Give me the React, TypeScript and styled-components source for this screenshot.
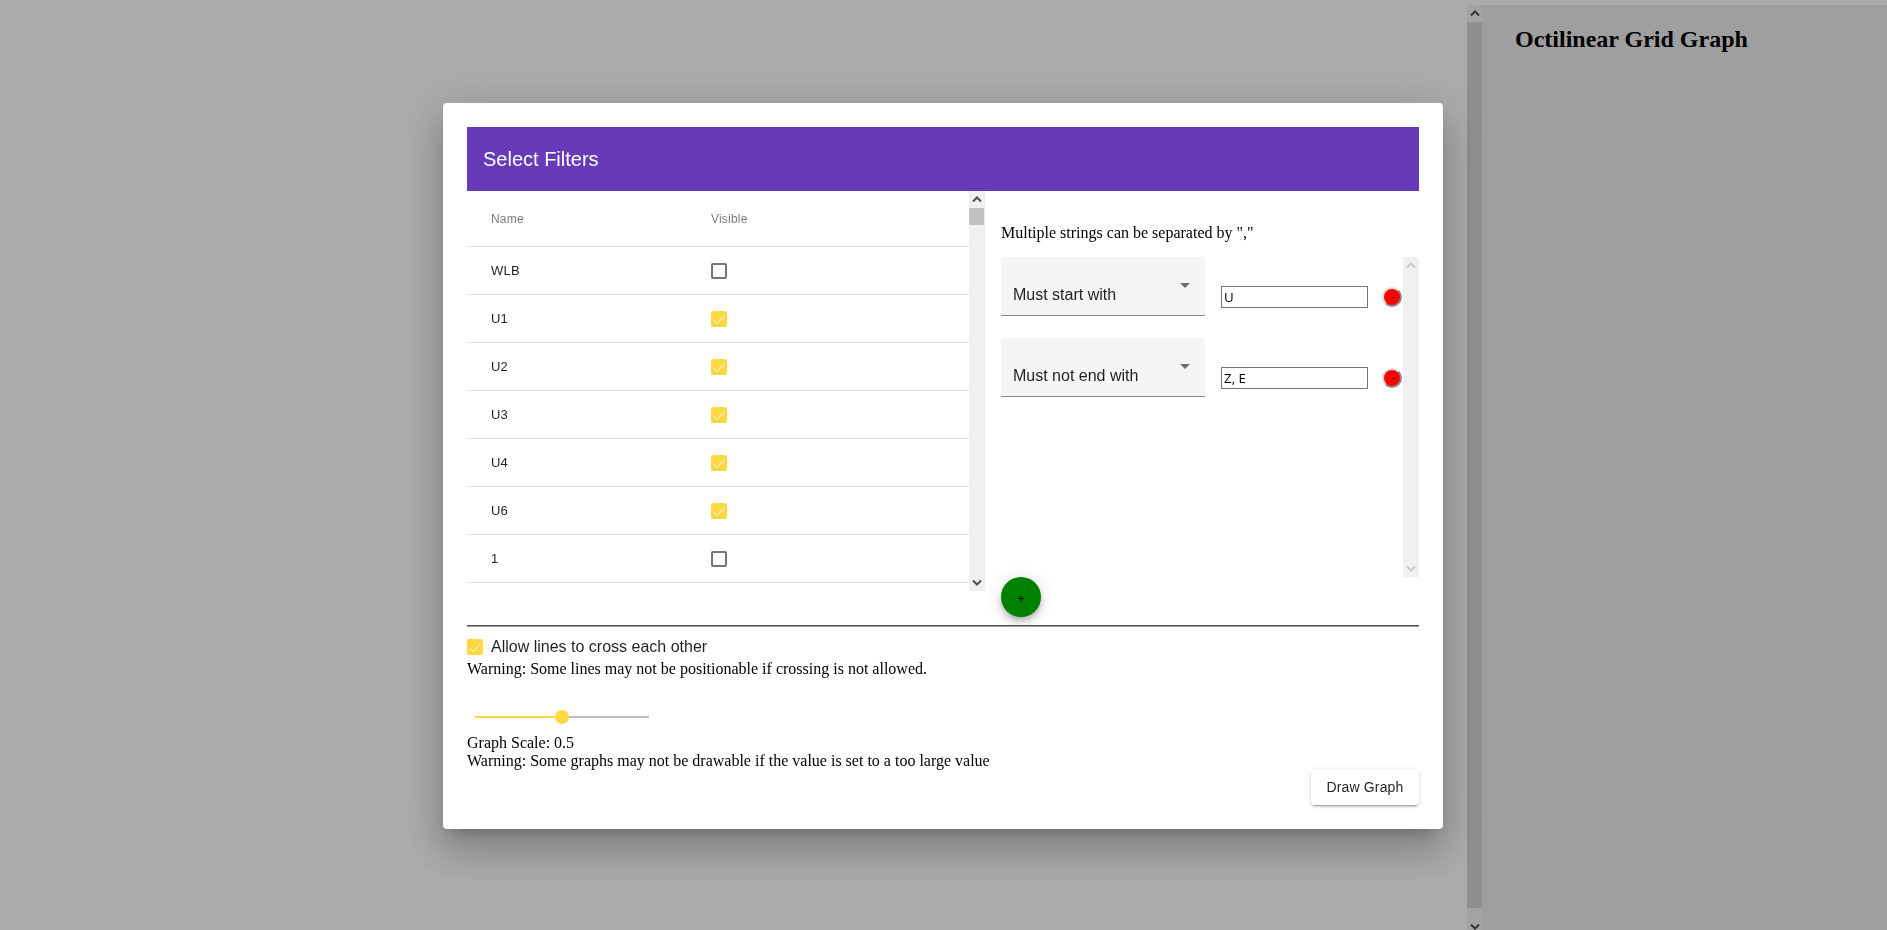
import React from "react";
import styled, { createGlobalStyle } from "styled-components";

const Global = createGlobalStyle`
  html, body { margin: 0; padding: 0; height: 100%; overflow: hidden; background: #fff; }
  #root { height: 930px; }
  * { box-sizing: border-box; }
`;

const SANS = `"Liberation Sans", Arial, sans-serif`;
const SERIF = `"Liberation Serif", "Times New Roman", serif`;
const AMBER = "#ffd740";

const Page = styled.div`
  display: flex;
  height: 930px;
  overflow: hidden;
  background: #fff;
  font-family: ${SERIF};
  font-size: 16px;
`;
const Canvas = styled.main`
  flex: 1;
`;
const SidePanel = styled.aside`
  width: 420px;
  height: 930px;
  margin-top: 5px;
  display: flex;
  flex: none;
  background: #eeeeee;
`;
const PanelBody = styled.div`
  flex: 1;
  padding: 21px 0 0 33px;
`;
const PanelTitle = styled.h2`
  margin: 0;
  font-size: 24px;
  line-height: 27px;
  font-weight: 700;
  color: #000;
`;

const Bar = styled.div<{ $w: number; $h: number; $track: string }>`
  width: ${(p) => p.$w}px;
  height: ${(p) => p.$h}px;
  flex: none;
  display: flex;
  flex-direction: column;
  justify-content: space-between;
  background: ${(p) => p.$track};
`;
const BarTop = styled.div`
  display: flex;
  flex-direction: column;
`;
const ArrowBox = styled.div`
  height: 17px;
  display: flex;
  align-items: center;
  justify-content: center;
  flex: none;
`;
const Thumb = styled.div<{ $h: number; $w: number; $color: string }>`
  width: ${(p) => p.$w}px;
  height: ${(p) => p.$h}px;
  background: ${(p) => p.$color};
`;

const Chevron: React.FC<{ down?: boolean; muted?: boolean }> = ({ down, muted }) => (
  <svg width="10" height="7" viewBox="0 0 10 7" fill="none">
    <path
      d={down ? "M1 1.5 L5 5.5 L9 1.5" : "M1 5.5 L5 1.5 L9 5.5"}
      stroke={muted ? "#c8c8c8" : "#505050"}
      strokeWidth="2"
    />
  </svg>
);

const Scrollbar: React.FC<{
  w: number;
  h: number;
  thumb?: number;
  thumbW?: number;
  muted?: boolean;
  track?: string;
  thumbColor?: string;
}> = ({ w, h, thumb, thumbW, muted, track = "#f0f0f0", thumbColor = "#c1c1c1" }) => (
  <Bar $w={w} $h={h} $track={track}>
    <BarTop>
      <ArrowBox>
        <Chevron muted={muted} />
      </ArrowBox>
      {thumb ? <Thumb $h={thumb} $w={thumbW ?? w} $color={thumbColor} /> : null}
    </BarTop>
    <ArrowBox>
      <Chevron down muted={muted} />
    </ArrowBox>
  </Bar>
);

const Overlay = styled.div`
  position: fixed;
  inset: 0;
  display: flex;
  align-items: center;
  justify-content: center;
  padding: 2px 1px 0 0;
  background: rgba(0, 0, 0, 0.33);
`;
const Dialog = styled.section`
  width: 1000px;
  height: 726px;
  padding: 24px;
  background: #fff;
  border-radius: 4px;
  box-shadow: 0 11px 15px -7px rgba(0, 0, 0, 0.2), 0 24px 38px 3px rgba(0, 0, 0, 0.14),
    0 9px 46px 8px rgba(0, 0, 0, 0.12);
  display: flex;
  flex-direction: column;
`;
const Header = styled.header`
  height: 64px;
  flex: none;
  display: flex;
  align-items: center;
  padding-left: 16px;
  background: #673ab7;
  color: #fff;
  font: 400 20px ${SANS};
`;
const Columns = styled.div`
  display: flex;
  gap: 16px;
  align-items: flex-start;
  height: 426px;
  flex: none;
`;
const TableArea = styled.div`
  display: flex;
  width: 518px;
  height: 400px;
  flex: none;
`;
const Table = styled.div`
  flex: 1;
  font-family: ${SANS};
`;
const Row = styled.div<{ $head?: boolean }>`
  display: grid;
  grid-template-columns: 220px 1fr;
  align-items: center;
  height: ${(p) => (p.$head ? 56 : 48)}px;
  padding-left: 24px;
  border-bottom: 1px solid #e0e0e0;
  font-size: ${(p) => (p.$head ? 12 : 13)}px;
  letter-spacing: 0.2px;
  color: ${(p) => (p.$head ? "rgba(0,0,0,.54)" : "rgba(0,0,0,.87)")};
`;
const BoxShell = styled.span<{ $on: boolean }>`
  width: 16px;
  height: 16px;
  display: block;
  flex: none;
  border-radius: 2px;
  background: ${(p) => (p.$on ? AMBER : "transparent")};
  border: ${(p) => (p.$on ? "none" : "2px solid #757575")};
`;
const CheckBox: React.FC<{ on: boolean }> = ({ on }) => (
  <BoxShell $on={on}>
    {on ? (
      <svg width="16" height="16" viewBox="0 0 16 16" fill="none">
        <path d="M2.5 9 L6 12.5 L13.5 4.5" stroke="#fff" strokeWidth="1" />
      </svg>
    ) : null}
  </BoxShell>
);

const RightCol = styled.div`
  width: 418px;
  flex: none;
  display: flex;
  flex-direction: column;
`;
const Note = styled.p`
  margin: 33px 0 15px;
  line-height: 18px;
  color: #000;
`;
const FilterArea = styled.div`
  display: flex;
  height: 320px;
  flex: none;
`;
const FilterList = styled.div`
  flex: 1;
  display: flex;
  flex-direction: column;
  gap: 22px;
`;
const FilterRow = styled.div`
  display: flex;
  align-items: flex-start;
`;
const SelectBox = styled.div`
  width: 204px;
  height: 59px;
  flex: none;
  display: flex;
  align-items: flex-end;
  justify-content: space-between;
  padding: 0 17px 11px 12px;
  background: #f5f5f5;
  border-bottom: 1px solid #8a8a8a;
  border-radius: 4px 4px 0 0;
  font: 400 16px/18px ${SANS};
  color: rgba(0, 0, 0, 0.87);
`;
const Caret = styled.svg`
  margin: 0 -2px 16px 0;
  flex: none;
`;
const TextBox = styled.input`
  width: 147px;
  height: 22px;
  margin: 29px 0 0 16px;
  padding: 1px 2px;
  border: 1px solid #767676;
  background: #fff;
  color: #000;
  font: 400 13.33px "Open Sans", sans-serif;
  outline: none;
`;
const RemoveBtn = styled.button`
  width: 20px;
  height: 20px;
  margin: 30px 0 0 14px;
  padding: 0 0 0 3px;
  border-width: 2px;
  border-style: solid;
  border-color: #dcdcdc #8c8c8c #8c8c8c #dcdcdc;
  border-radius: 50%;
  background: #f00;
  color: #000;
  font: 400 10px/14px ${SANS};
`;
const AddBtn = styled.button`
  width: 40px;
  height: 40px;
  padding: 2px 0 0;
  border: none;
  border-radius: 50%;
  background: #008000;
  color: #000;
  font: 400 13px ${SANS};
  box-shadow: 0 3px 5px -1px rgba(0, 0, 0, 0.2), 0 6px 10px 0 rgba(0, 0, 0, 0.14), 0 1px 18px 0 rgba(0, 0, 0, 0.12);
`;
const Rule = styled.hr`
  margin: 8px 0 0;
  height: 2px;
  flex: none;
  border: none;
  border-top: 1px solid #555;
  border-bottom: 1px solid #999;
`;
const CrossRow = styled.label`
  display: flex;
  align-items: center;
  gap: 8px;
  height: 22px;
  margin-top: 9px;
  font: 400 16px ${SANS};
  color: rgba(0, 0, 0, 0.87);
`;
const Para = styled.p<{ $top?: number }>`
  margin: ${(p) => p.$top ?? 0}px 0 0;
  line-height: 18px;
  color: #000;
`;
const Slider = styled.div`
  display: flex;
  align-items: center;
  width: 174px;
  height: 14px;
  margin: 32px 0 0 8px;
`;
const SliderFill = styled.div<{ $on?: boolean }>`
  height: 2px;
  background: ${(p) => (p.$on ? AMBER : "#bdbdbd")};
  flex: ${(p) => (p.$on ? "0 0 80px" : "1")};
`;
const SliderKnob = styled.div`
  width: 14px;
  height: 14px;
  flex: none;
  border-radius: 50%;
  background: ${AMBER};
`;
const Actions = styled.div`
  display: flex;
  justify-content: flex-end;
  margin-top: -1px;
`;
const DrawBtn = styled.button`
  width: 108px;
  height: 36px;
  padding: 0;
  border: none;
  border-radius: 4px;
  background: #fff;
  color: rgba(0, 0, 0, 0.87);
  font: 400 14px ${SANS};
  letter-spacing: 0.15px;
  box-shadow: 0 3px 1px -2px rgba(0, 0, 0, 0.2), 0 2px 2px 0 rgba(0, 0, 0, 0.14), 0 1px 5px 0 rgba(0, 0, 0, 0.12);
`;

const lines: [string, boolean][] = [
  ["WLB", false],
  ["U1", true],
  ["U2", true],
  ["U3", true],
  ["U4", true],
  ["U6", true],
  ["1", false],
];
const filters = [
  { label: "Must start with", value: "U" },
  { label: "Must not end with", value: "Z, E" },
];

export default function App() {
  return (
    <Page>
      <Global />
      <Canvas />
      <SidePanel>
        <Scrollbar w={15} h={930} thumb={886} track="#f4f4f4" thumbColor="#d6d6d6" />
        <PanelBody>
          <PanelTitle>Octilinear Grid Graph</PanelTitle>
        </PanelBody>
      </SidePanel>
      <Overlay>
        <Dialog>
          <Header>Select Filters</Header>
          <Columns>
            <TableArea>
              <Table>
                <Row $head>
                  <span>Name</span>
                  <span>Visible</span>
                </Row>
                {lines.map(([name, on]) => (
                  <Row key={name}>
                    <span>{name}</span>
                    <CheckBox on={on} />
                  </Row>
                ))}
              </Table>
              <Scrollbar w={16} h={400} thumb={17} thumbW={15} />
            </TableArea>
            <RightCol>
              <Note>Multiple strings can be separated by ","</Note>
              <FilterArea>
                <FilterList>
                  {filters.map((f) => (
                    <FilterRow key={f.label}>
                      <SelectBox>
                        {f.label}
                        <Caret width="10" height="5" viewBox="0 0 10 5">
                          <path d="M0 0 L10 0 L5 5 Z" fill="rgba(0,0,0,.54)" />
                        </Caret>
                      </SelectBox>
                      <TextBox defaultValue={f.value} />
                      <RemoveBtn>-</RemoveBtn>
                    </FilterRow>
                  ))}
                </FilterList>
                <Scrollbar w={16} h={320} muted />
              </FilterArea>
              <AddBtn>+</AddBtn>
            </RightCol>
          </Columns>
          <Rule />
          <CrossRow>
            <CheckBox on />
            Allow lines to cross each other
          </CrossRow>
          <Para $top={2}>Warning: Some lines may not be positionable if crossing is not allowed.</Para>
          <Slider>
            <SliderFill $on />
            <SliderKnob />
            <SliderFill />
          </Slider>
          <Para $top={10}>Graph Scale: 0.5</Para>
          <Para>Warning: Some graphs may not be drawable if the value is set to a too large value</Para>
          <Actions>
            <DrawBtn>Draw Graph</DrawBtn>
          </Actions>
        </Dialog>
      </Overlay>
    </Page>
  );
}
